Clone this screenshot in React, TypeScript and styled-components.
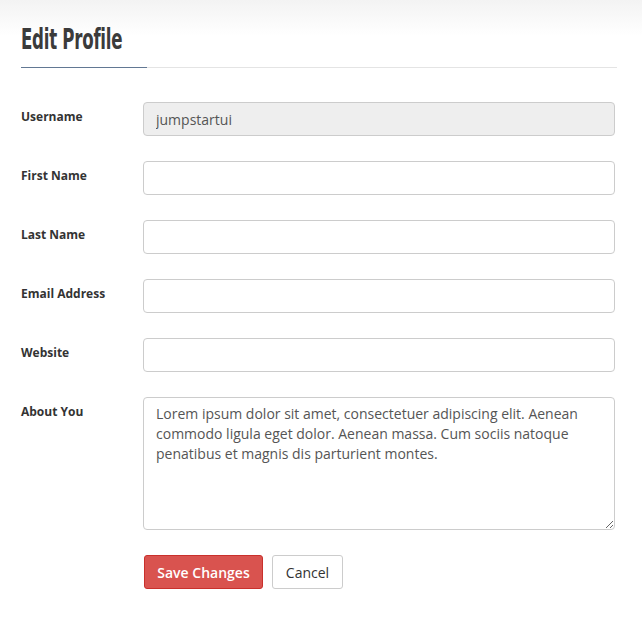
import React from "react";
import styled, { createGlobalStyle } from "styled-components";

const Global = createGlobalStyle`
  html, body { margin: 0; padding: 0; background: #fff; }
  body { font-family: "Open Sans", "Liberation Sans", sans-serif; color: #333; }
  * { box-sizing: border-box; }
`;

const Page = styled.div`
  width: 642px;
  min-height: 625px;
  background: linear-gradient(to bottom, #f3f3f3 0px, #ffffff 36px, #ffffff 100%);
  padding: 0 25px 0 21px;
`;

const Header = styled.div`
  padding-top: 25px;
  border-bottom: 1px solid #e4e4e4;
  display: flex;
  flex-direction: column;
`;

const Title = styled.h1`
  margin: 0 0 -1px 0;
  align-self: flex-start;
  width: 126px;
  padding-bottom: 12px;
  border-bottom: 1px solid #627893;
  font-weight: 700;
  font-size: 28px;
  line-height: 30px;
  height: 43px;
  color: #3b3b3b;
  white-space: nowrap;
`;

const TitleText = styled.span`
  display: inline-block;
  vertical-align: top;
  font-family: "Liberation Sans Narrow", "DejaVu Sans Condensed", "Liberation Sans", sans-serif;
  letter-spacing: -0.4px;
  transform: scaleX(0.66);
  transform-origin: left center;
`;

const Form = styled.form`
  display: flex;
  flex-direction: column;
  gap: 25px;
  padding-top: 34px;
`;

const Row = styled.div`
  display: grid;
  grid-template-columns: 122px 472px;
  align-items: start;
`;

const Label = styled.label`
  font-size: 12px;
  font-weight: 700;
  color: #333;
  padding-top: 7px;
  line-height: 16px;
`;

const Input = styled.input<{ $disabled?: boolean }>`
  height: 34px;
  width: 100%;
  border: 1px solid #ccc;
  border-radius: 4px;
  background: ${(p) => (p.$disabled ? "#eeeeee" : "#fff")};
  padding: 6px 12px;
  font-family: "Open Sans", "Liberation Sans", sans-serif;
  font-size: 14px;
  color: #555;
  outline: none;
`;

const TextArea = styled.textarea`
  height: 133px;
  width: 100%;
  border: 1px solid #ccc;
  border-radius: 4px;
  padding: 6px 12px;
  font-family: "Open Sans", "Liberation Sans", sans-serif;
  font-size: 14px;
  line-height: 20px;
  color: #555;
  resize: both;
  outline: none;
  display: block;
`;

const Actions = styled.div`
  display: flex;
  gap: 9px;
  margin-left: 123px;
`;

const Button = styled.button<{ $primary?: boolean }>`
  height: 34px;
  padding: 0 12px;
  border-radius: 3px;
  font-family: "Open Sans", "Liberation Sans", sans-serif;
  font-size: 14px;
  font-weight: ${(p) => (p.$primary ? 600 : 400)};
  color: ${(p) => (p.$primary ? "#fff" : "#333")};
  background: ${(p) => (p.$primary ? "#d9534f" : "#fff")};
  border: 1px solid ${(p) => (p.$primary ? "#c9302c" : "#ccc")};
  min-width: ${(p) => (p.$primary ? "119px" : "71px")};
  cursor: pointer;
`;

export default function App() {
  return (
    <Page>
      <Global />
      <Header>
        <Title>
          <TitleText>Edit Profile</TitleText>
        </Title>
      </Header>
      <Form onSubmit={(e) => e.preventDefault()}>
        <Row>
          <Label>Username</Label>
          <Input $disabled readOnly defaultValue="jumpstartui" />
        </Row>
        <Row>
          <Label>First Name</Label>
          <Input />
        </Row>
        <Row>
          <Label>Last Name</Label>
          <Input />
        </Row>
        <Row>
          <Label>Email Address</Label>
          <Input />
        </Row>
        <Row>
          <Label>Website</Label>
          <Input />
        </Row>
        <Row>
          <Label>About You</Label>
          <TextArea defaultValue="Lorem ipsum dolor sit amet, consectetuer adipiscing elit. Aenean commodo ligula eget dolor. Aenean massa. Cum sociis natoque penatibus et magnis dis parturient montes." />
        </Row>
        <Actions>
          <Button $primary type="button">Save Changes</Button>
          <Button type="button">Cancel</Button>
        </Actions>
      </Form>
    </Page>
  );
}
